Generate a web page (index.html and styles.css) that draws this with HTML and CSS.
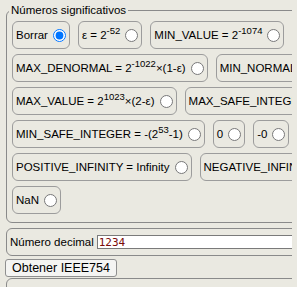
FILE: index.html
```html
<!DOCTYPE html>
<html lang="es">
<head>
    <meta charset="UTF-8">
    <meta name="viewport" content="width=device-width, initial-scale=1.0">
    <title>IEEE754</title>
    <link rel="stylesheet" href="styles.css">
</head>
<body>
    <fieldset class="sig">
        <legend>Números significativos</legend>
        <div class="opts">
            <label class="opt"><span>Borrar</span><input type="radio" name="sig" checked></label>
            <label class="opt"><span>ε = 2<sup>-52</sup></span><input type="radio" name="sig"></label>
            <label class="opt"><span>MIN_VALUE = 2<sup>-1074</sup></span><input type="radio" name="sig"></label>
            <label class="opt"><span>MAX_DENORMAL = 2<sup>-1022</sup>×(1-ε)</span><input type="radio" name="sig"></label>
            <label class="opt"><span>MIN_NORMAL = 2<sup>-1022</sup></span><input type="radio" name="sig"></label>
            <label class="opt"><span>MAX_VALUE = 2<sup>1023</sup>×(2-ε)</span><input type="radio" name="sig"></label>
            <label class="opt"><span>MAX_SAFE_INTEGER = 2<sup>53</sup>-1</span><input type="radio" name="sig"></label>
            <label class="opt"><span>MIN_SAFE_INTEGER = -(2<sup>53</sup>-1)</span><input type="radio" name="sig"></label>
            <label class="opt"><span>0</span><input type="radio" name="sig"></label>
            <label class="opt"><span>-0</span><input type="radio" name="sig"></label>
            <label class="opt"><span>POSITIVE_INFINITY = Infinity</span><input type="radio" name="sig"></label>
            <label class="opt"><span>NEGATIVE_INFINITY = -Infinity</span><input type="radio" name="sig"></label>
            <label class="opt"><span>NaN</span><input type="radio" name="sig"></label>
        </div>
    </fieldset>

    <div class="box dec">
        <span>Número decimal</span>
        <input type="text" class="num" value="1234">
    </div>

    <button class="btn">Obtener IEEE754</button>

    <div class="box out"></div>
</body>
</html>
```

FILE: styles.css
```css
html { overflow: hidden; }
body { margin: 3px 5px; background: #eae9e1; font-family: "Liberation Sans", Arial, sans-serif; font-size: 11.5px; color: #000; }

.sig { width: 430px; margin: 0 1px; padding: 4px 5px 8px 5px; border: 1px solid #8a8a8a; border-radius: 6px; }
.sig legend { margin-left: -3px; padding: 0 2px; line-height: 14px; }

.opts { display: flex; flex-wrap: wrap; column-gap: 8px; row-gap: 5px; }
.opt { display: flex; align-items: center; height: 28px; box-sizing: border-box; padding: 0 0 0 3px; border: 1px solid #9c9c9c; border-radius: 6px; line-height: 18px; white-space: nowrap; }
.opt input { width: 13px; height: 13px; margin: 1px 3px 0 5px; }
.opt sup { font-size: 9.5px; line-height: 0; vertical-align: 5px; }

.box { width: 440px; margin: 5px 1px 0 1px; box-sizing: border-box; border: 1px solid #8a8a8a; border-radius: 6px; }
.dec { display: flex; align-items: center; height: 28px; padding: 0 3px; }
.num { width: 300px; height: 14px; box-sizing: border-box; margin: 0 0 0 3px; padding: 0 1px; border: 1px solid #7a7a7a; background: #fff; color: #7a0a0a; font-family: "DejaVu Sans Mono", "Liberation Mono", monospace; font-size: 11px; line-height: 12px; }

.btn { display: block; height: 18px; margin-top: 3px; padding: 0 6px; border: 1px solid #8f8f8f; border-radius: 3px; background: #f4f4f2; font-family: "Liberation Sans", Arial, sans-serif; font-size: 12.5px; color: #000; line-height: 16px; }

.out { height: 40px; margin-top: 1px; }
```
